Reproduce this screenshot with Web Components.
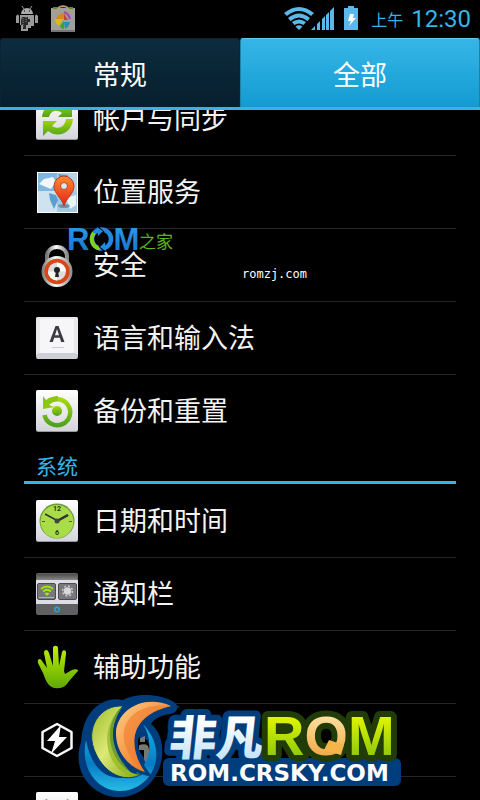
<!DOCTYPE html>
<html lang="zh-CN">
<head>
<meta charset="utf-8">
<meta name="viewport" content="width=device-width, initial-scale=1">
<title>设置</title>
<style>
html,body{margin:0;height:100%;background:#000}
body{font-family:Roboto,"Noto Sans CJK SC",sans-serif;color:#f3f3f3}
</style>
</head>
<body>
<settings-screen></settings-screen>
<script>
const define = (name, css, html) => customElements.define(name, class extends HTMLElement {
  constructor() {
    super();
    const t = document.createElement('template');
    t.innerHTML = `<style>*{box-sizing:border-box}${css}</style>${html}`;
    this.attachShadow({mode: 'open'}).append(t.content.cloneNode(true));
  }
});

const tile = `<linearGradient id="t" x2="0" y2="1"><stop stop-color="#fff"/><stop offset="1" stop-color="#d4d4dc"/></linearGradient><linearGradient id="g" x2="0" y2="1"><stop stop-color="#a6d80c"/><stop offset="1" stop-color="#4fa31b"/></linearGradient>`;
const plate = `<rect width="42" height="42" rx="2" fill="#999"/><rect width="42" height="41" rx="2" fill="url(#t)"/>`;
const icons = {
  sync: plate + `<path d="M6 19C7 6 22 1 31 9L36 4V19H22L26 15C21 11 15 12 13 19Z" fill="url(#g)"/><path d="M37 21C36 35 22 41 12 33L7 38V23H21L16 28C22 32 29 29 30 21Z" fill="url(#g)"/>`,
  place: `<linearGradient id="r" x2="0" y2="1"><stop stop-color="#ff8c2e"/><stop offset="1" stop-color="#e5211b"/></linearGradient>
    <path d="M1 1H42V42H1Z" fill="#fff"/><path d="M2 2H21V20H2Z" fill="#7fb7de"/><path d="M21 2H41V20H21Z" fill="#b5d3e8"/><path d="M2 20H21V41H2Z" fill="#cfe2ef"/><path d="M21 20H41V41H21Z" fill="#a3cae4"/>
    <path d="M3 13L8 8L17 6L20 11L15 18L10 16Z" fill="#f2f8fc"/><path d="M22 3L32 4L30 9L25 11ZM13 22L20 24L22 29L18 38L14 29Z" fill="#5a9fd2"/><path d="M30 27L40 24V34L34 38Z" fill="#e9f4fa"/>
    <ellipse cx="28" cy="35" rx="6" ry="2" fill="#456" opacity=".5"/><path d="M28 35C26 27 18 23 18 15A10 10 0 0 1 38 15C38 23 30 27 28 35Z" fill="url(#r)" stroke="#b93a20"/><circle cx="28" cy="15" r="3.5" fill="#d9e7ef" stroke="#b4482a"/>`,
  lock: `<linearGradient id="m" x2="1"><stop stop-color="#777"/><stop offset=".45" stop-color="#fff"/><stop offset="1" stop-color="#8a8a8a"/></linearGradient>
    <path d="M11 21V12A10 9 0 0 1 31 12V21" fill="none" stroke="url(#m)" stroke-width="4"/><circle cx="21" cy="27.500" r="15.500" fill="url(#m)"/><circle cx="21" cy="27.500" r="12.700" fill="#d84718"/><circle cx="21" cy="27.500" r="9" fill="#ddd"/><path d="M21 18.500A9 9 0 0 1 30 27.500H21ZM21 36.500A9 9 0 0 1 12 27.500H21Z" fill="#f8f8f8"/><circle cx="21" cy="26" r="3" fill="#222"/><path d="M20 27H22L23 33H19Z" fill="#222"/>`,
  key: `<rect width="42" height="42" rx="2" fill="#b9b9c3"/><path d="M0 2Q0 0 2 0H40Q42 0 42 2V38L38 36H4L0 38Z" fill="#e8e8ed"/><path d="M0 39L4 36H38L42 39L40 42H2Z" fill="#cfcfd8"/><rect x="4" y="2" width="34" height="34" rx="2" fill="#f6f6f8"/><path d="M13.500 25L19.500 9H22.500L28.500 25H25.200L23.800 20.800H18.200L16.800 25ZM19 18.200H23L21 12Z" fill="#3b3b40" fill-rule="evenodd"/><path d="M16 30.500H28" stroke="#ccc"/>`,
  backup: plate + `<path d="M12 13A13 13 0 1 1 8.500 25" fill="none" stroke="url(#g)" stroke-width="4.500"/><path d="M7 6L10 10C14 7 18 6 22 6V11C18 11 15 12 13 15L18 17L7 19Z" fill="#8cc714"/><circle cx="21" cy="21" r="5" fill="url(#g)"/>`,
  clock: plate + `<circle cx="21" cy="21" r="17.500" fill="#6f9937"/><circle cx="21" cy="21.500" r="16.500" fill="#a9dc49"/><path d="M9 14L22 21M20 22L32 15" stroke="#333" stroke-width="1.500"/><path d="M21 21L32 15" stroke="#333" stroke-width="2.500"/><circle cx="21" cy="21" r="2.500" fill="#444"/><path d="M6 21.500H9M33 21.500H36" stroke="#40661b"/><text x="21" y="11" text-anchor="middle" font-size="7" font-weight="700" fill="#27380e">12</text><text x="21" y="35" text-anchor="middle" font-size="7" font-weight="700" fill="#27380e">6</text>`,
  panel: `<linearGradient id="d" x2="0" y2="1"><stop stop-color="#4b4b4b"/><stop offset="1" stop-color="#888"/></linearGradient><rect width="42" height="42" rx="2" fill="#606062"/><path d="M1 1H41V7H1Z" fill="url(#d)"/><path d="M0 7H42V31H0Z" fill="#dddde8"/><rect x="1.500" y="10.500" width="18" height="16" rx="1.500" fill="#77777c" stroke="#4b4b50"/><rect x="22.500" y="10.500" width="18" height="16" rx="1.500" fill="#77777c" stroke="#4b4b50"/><path d="M3 24.500H18" stroke="#9fe000"/><path d="M5 16Q11 11 17 16M7 18.500Q11 15 15 18.500" stroke="#a4e800" stroke-width="1.700" fill="none"/><path d="M8.500 20.500Q11 18.500 13.500 20.500L11 23Z" fill="#a4e800"/><circle cx="31.500" cy="18" r="3.800" fill="#d8d8dc"/><circle cx="31.500" cy="18" r="5" fill="none" stroke="#c8c8cc" stroke-width="1.500" stroke-dasharray="2 1.900"/><circle cx="21" cy="36.500" r="2.300" fill="none" stroke="#2aa4dc" stroke-width="1.400"/>`,
  hand: `<linearGradient id="h" x2="0" y2="1"><stop stop-color="#bdf000"/><stop offset="1" stop-color="#5fa806"/></linearGradient><path d="M14 40C10 36 9 32 7 27L2 17C1 12 5 12 6 15L11 22L8 7C8 3 12 3 13 7L17 20V2C17-1 22-1 22 2L23 20L26 6C27 3 31 4 30 8L28 25L29 28L36 24C40 22 44 24 41 26L34 34C30 40 27 42 23 42Q18 43 14 40Z" fill="url(#h)"/>`,
  power: `<path d="M21 5L35.500 13V29L21 37L6.500 29V13Z" fill="none" stroke="#f8f8f8" stroke-width="2.500" stroke-linejoin="round"/><path d="M25 6L11 22H19L15 35L31 18H23Z" fill="#fff"/>`,
  dev: plate + `<path d="M9 8L14 13M33 8L28 13" stroke="#8bc72b" stroke-width="4"/><path d="M7 22A14 12 0 0 1 35 22Z" fill="#97c833"/>`
};

customElements.define('setting-icon', class extends HTMLElement {
  connectedCallback() {
    if (this.shadowRoot) return;
    this.attachShadow({mode: 'open'}).innerHTML = `<style>:host{display:block;width:42px;height:42px;flex:none}svg{display:block;overflow:visible}</style><svg width="42" height="42" viewBox="0 0 42 42" aria-hidden="true"><defs>${tile}</defs>${icons[this.getAttribute('name')]}</svg>`;
  }
});

define('status-bar', `
:host{display:flex;align-items:center;justify-content:space-between;height:38px;flex:none;padding:0 9px 0 16px;color:#33b5e5}
div{display:flex;align-items:center}.n{gap:12px}svg{display:block}
small{font-size:16px;line-height:20px;margin:4px 8px 0 12px}time{font-size:24px;line-height:30px}
`, `<div class="n">
<svg width="22" height="26" viewBox="0 0 22 26"><path d="M5 8A6 6 0 0 1 17 8Z" fill="#aaa"/><path d="M6 0L8 3M16 0L14 3" stroke="#999"/><path d="M4 9H18V20H15V22H12V25H5V19H4ZM0 10Q2 7 3 10V17H0ZM19 10Q20 7 22 10V17H19Z" fill="#999"/><path d="M6 11H12V13H14V16H12V19H10V23H7V19H5V14Z" fill="#292929"/><path d="M7 12V22M10 11V17" stroke="#888" stroke-dasharray="1 1"/><path d="M8 5H9M13 5H14" stroke="#000"/></svg>
<svg width="26" height="28" viewBox="0 0 26 28"><path d="M1 3H25V27H1Z" fill="#a19f9a"/><path d="M1 25H25V27H1Z" fill="#777"/><path d="M6 8C6-1 20-1 20 8" fill="none" stroke="#bd9b76" stroke-width="2"/><path d="M3 3H7M19 3H23" stroke="#538d45" stroke-width="2"/><path d="M6 14Q8 8 16 8L13 14Z" fill="#dc861c"/><path d="M5 14H13L9 21Q5 19 5 14Z" fill="#d8bb19"/><path d="M10 21L14 16L14 24Q11 24 10 21Z" fill="#3aa52b"/><path d="M14 17H20Q19 22 15 24Z" fill="#2791b0"/><path d="M14 7Q19 9 20 14" fill="none" stroke="#984bb0" stroke-width="2"/><path d="M14 9L18 15H14Z" fill="#d0402b"/></svg>
</div><div>
<svg width="75" height="28" viewBox="0 0 75 28" fill="#5cb7ea"><g transform="translate(0 2)"><path d="M0 6Q15-6 30 6L27 9Q15-1 3 9ZM4 11Q15 2 26 11L23.500 14Q15 7 6.500 14ZM8 15Q15 10 22 15L19.500 18Q15 15 10.500 18ZM11.500 19.500Q15 17 18.500 19.500L15 23Z"/><path d="M27 23L31 19V23ZM33 17L36 14V23H33ZM38 12L41 9V23H38ZM42 8L45 5V23H42ZM46 4L50 0V23H46Z"/><path d="M64-1H70V1H74V23H60V1H64Z"/></g><path d="M66 9H70L69 13H72L65 21L67 16H64Z" fill="#fff"/></svg>
<small>上午</small><time>12:30</time></div>`);

define('tab-bar', `
:host{display:flex;flex:none;height:72px;border-bottom:3px solid #33b5e5}
button{flex:1;border:1px solid #0a2431;border-bottom:0;border-radius:3px 3px 0 0;padding:6px 0 0;background:linear-gradient(#0d2c3e,#061f2e);color:#fff;font:27px/36px Roboto,"Noto Sans CJK SC",sans-serif}
button[aria-selected=true]{background:linear-gradient(#36b6e7,#139bd1);border-color:#2380a5;border-top-color:#65c8ee}
`, `<button role="tab" aria-selected="false">常规</button><button role="tab" aria-selected="true">全部</button>`);

define('setting-row', `
:host{display:block;height:73px;border-bottom:1px solid #262626}
:host([last]){border-color:transparent}
a{display:flex;align-items:center;gap:15px;height:72px;padding-left:12px;color:inherit;text-decoration:none;font-size:27px;line-height:36px}
span{padding-top:2px}
`, `<a href="#"><slot name="icon"></slot><span><slot></slot></span></a>`);

define('section-title', `
:host{display:block;height:36px;margin-bottom:1px;border-bottom:3px solid #33b5e5}
h2{margin:0;padding:5px 12px 0;font-size:21px;line-height:28px;font-weight:400;color:#33b5e5}
`, `<h2><slot></slot></h2>`);

define('home-mark', `:host{display:block}svg{display:block;overflow:visible}`, `
<svg width="110" height="30" viewBox="66 224 110 30"><defs><linearGradient id="b" x2="0" y2="1"><stop stop-color="#2ca0ee"/><stop offset="1" stop-color="#146fca"/></linearGradient></defs>
<text x="67" y="250" font-family="Liberation Sans,sans-serif" font-weight="700" font-size="31" fill="url(#b)">R<tspan fill="#1b7cd6">O</tspan>M</text>
<circle cx="101.500" cy="239" r="8.500" fill="#000"/><circle cx="101.500" cy="239" r="9.500" fill="none" stroke="#2389e0" stroke-width="4.500"/>
<path d="M94 233A9.500 9.500 0 0 0 100 248.500" fill="none" stroke="#86d01c" stroke-width="4"/>
<path d="M98 227L104 232M105 252L99 246" stroke="#000" stroke-width="1.500"/><path d="M97 227L103 231L98 236ZM106 251L100 247L105 242Z" fill="#2389e0"/>
<text x="139" y="248" font-family="Noto Sans CJK SC,sans-serif" font-size="17" fill="#5fb51c">之家</text></svg>`);

define('site-mark', `:host{display:block}svg{display:block;overflow:visible}`, `
<svg width="330" height="106" viewBox="76 692 330 106"><defs>
<linearGradient id="o" x2="1" y2="1"><stop stop-color="#ffd08a"/><stop offset=".5" stop-color="#f59643"/><stop offset="1" stop-color="#e35d17"/></linearGradient>
<linearGradient id="l" x2="1" y2="1"><stop stop-color="#9cba22"/><stop offset=".45" stop-color="#dce979"/><stop offset="1" stop-color="#7da60a"/></linearGradient>
<linearGradient id="c" x2="0" y2="1"><stop stop-color="#14b5e3"/><stop offset=".6" stop-color="#087bc5"/><stop offset="1" stop-color="#25bce5"/></linearGradient>
<linearGradient id="w" x2="0" y2="1"><stop offset=".3" stop-color="#fff"/><stop offset="1" stop-color="#b4dcf5"/></linearGradient>
<linearGradient id="y" x2="0" y2="1"><stop offset=".2" stop-color="#e0f500"/><stop offset="1" stop-color="#79bd10"/></linearGradient>
<linearGradient id="q" x2="0" y2="1"><stop offset=".2" stop-color="#ffdfa0"/><stop offset="1" stop-color="#ed9a2d"/></linearGradient></defs>
<path fill-rule="evenodd" d="M86 720C94 704 108 697 123 700C136 693 159 693 174 702C180 707 177 713 170 714C160 715 153 720 151 724C164 734 166 758 156 775C145 795 120 803 101 793C82 784 74 762 81 742Q82 728 86 720ZM139 737Q134 749 149 763Q153 751 147 740Z" fill="#003d7c"/>
<path d="M140 738L145 736V742H140ZM139 745Q149 742 149 750V762L146 764L144 759V750H139Z" fill="#777"/>
<path d="M86 740C80 766 95 790 119 791C149 792 172 755 143 724C158 748 145 777 121 778C100 778 90 761 86 740Z" fill="url(#c)"/>
<path d="M123 706C101 704 83 728 96 754C105 773 124 784 142 774C117 776 96 731 123 706Z" fill="url(#l)" stroke="#003d7c"/>
<path d="M123 706C92 732 112 777 134 775C116 760 104 732 123 706Z" fill="#94b91e" opacity=".75"/>
<path d="M171 706C145 694 116 709 116 734C116 753 130 768 145 772C129 750 126 716 171 706Z" fill="url(#o)" stroke="#003d7c" stroke-width="6" paint-order="stroke"/>
<path d="M171 706C140 702 121 718 124 740C126 754 136 765 145 772C129 750 126 716 171 706Z" fill="#ef7b31" opacity=".6"/>
<rect x="163" y="758" width="238" height="28" rx="6" fill="#003d7c"/>
<g stroke-linejoin="round" paint-order="stroke">
<g transform="translate(168 755) skewX(-6)"><text x="0" y="0" font-family="Noto Sans CJK SC,sans-serif" font-weight="900" font-size="47" fill="url(#w)" stroke="#003d7c" stroke-width="12">非凡</text></g>
<text x="264" y="755" font-family="Liberation Sans,sans-serif" font-weight="700" font-size="56" fill="url(#y)" stroke="#213c08" stroke-width="12">R<tspan fill="url(#q)">O</tspan>M</text></g>
<path d="M329 740L344 745L341 755L324 750Z" fill="#f5b54a"/>
<text x="170" y="781" font-family="DejaVu Sans,sans-serif" font-weight="700" font-size="23" fill="#fff">ROM.CRSKY.COM</text></svg>`);

const row = (icon, label, extra = '') => `<setting-row ${extra}><setting-icon slot="icon" name="${icon}"></setting-icon>${label}</setting-row>`;
define('settings-screen', `
:host{display:flex;flex-direction:column;position:relative;height:100vh;overflow:hidden;background:#000}
main{flex:1;min-height:0;overflow:hidden;padding:0 24px}
.list{margin-top:-27px}
home-mark{position:absolute;left:66px;top:224px}
.url{position:absolute;left:242px;top:266px;font:12px/16px "DejaVu Sans Mono",monospace;color:#fff}
site-mark{position:absolute;left:76px;top:692px}
`, `<status-bar></status-bar><tab-bar role="tablist"></tab-bar><main><div class="list">
${row('sync','帐户与同步')}${row('place','位置服务')}${row('lock','安全')}${row('key','语言和输入法')}${row('backup','备份和重置','last')}
<section-title>系统</section-title>
${row('clock','日期和时间')}${row('panel','通知栏')}${row('hand','辅助功能')}${row('power','')}${row('dev','')}
</div></main><home-mark></home-mark><span class="url">romzj.com</span><site-mark></site-mark>`);
</script>
</body>
</html>
